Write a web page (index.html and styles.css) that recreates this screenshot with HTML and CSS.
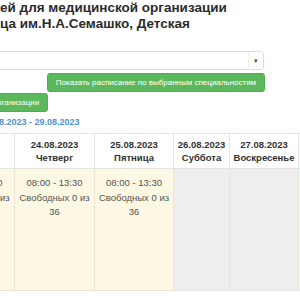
FILE: index.html
```html
<!DOCTYPE html>
<html lang="ru">
<head>
    <meta charset="UTF-8">
    <title>Расписание</title>
    <link rel="stylesheet" href="styles.css">
</head>
<body>
    <div class="page">
        <h3 class="title">ей для медицинской организации<br>ца им.Н.А.Семашко, Детская</h3>

        <div class="chooser">
            <div class="chooser-value"></div>
            <div class="chooser-arrow">▾</div>
        </div>

        <div class="actions">
            <a class="btn">Показать расписание по выбранным специальностям</a>
            <a class="btn btn-org">рганизации</a>
        </div>

        <div class="period">8.2023 - 29.08.2023</div>

        <table class="schedule">
            <thead>
                <tr>
                    <th class="w79">23.08.2023<br>Среда</th>
                    <th class="w79">24.08.2023<br>Четверг</th>
                    <th class="w78">25.08.2023<br>Пятница</th>
                    <th class="w55">26.08.2023<br>Суббота</th>
                    <th class="w68">27.08.2023<br>Воскресенье</th>
                    <th class="w79">28.08.2023<br>Понедельник</th>
                </tr>
            </thead>
            <tbody>
                <tr>
                    <td class="work">08:00 - 13:30<br>Свободных 0 из<br>36</td>
                    <td class="work">08:00 - 13:30<br>Свободных 0 из<br>36</td>
                    <td class="work">08:00 - 13:30<br>Свободных 0 из<br>36</td>
                    <td class="off"></td>
                    <td class="off"></td>
                    <td class="work">08:00 - 13:30<br>Свободных 0 из<br>36</td>
                </tr>
            </tbody>
        </table>
    </div>
</body>
</html>
```

FILE: styles.css
```css
body {
    margin: 0;
    width: 300px;
    height: 300px;
    overflow: hidden;
    background: #ffffff;
    font-family: "Liberation Sans", Arial, sans-serif;
    color: #333333;
}
.page {
    width: 265px;
}
.title {
    margin: 0;
    padding-top: 0;
    font-size: 13.5px;
    line-height: 16px;
    font-weight: bold;
    white-space: nowrap;
    color: #2b2b2b;
}
.chooser {
    display: flex;
    height: 17px;
    margin: 19px 1px 0 -20px;
    border: 1px solid #dddddd;
    border-radius: 3px;
    background: #ffffff;
}
.chooser-value {
    flex: 1;
}
.chooser-arrow {
    width: 14px;
    border-left: 1px solid #eeeeee;
    font-size: 7px;
    line-height: 17px;
    text-align: center;
    color: #444444;
}
.actions {
    display: flex;
    flex-direction: column;
    align-items: flex-end;
    margin-top: 3px;
}
.btn {
    display: flex;
    align-items: center;
    height: 17px;
    padding: 0 8px;
    border: 1px solid #4cae4c;
    border-radius: 3px;
    background: #5cb85c;
    color: #ffffff;
    font-size: 8px;
    white-space: nowrap;
}
.btn-org {
    align-self: flex-start;
    margin: 1px 0 0 -12px;
}
.period {
    margin: 5px 0 0 -1px;
    font-size: 9px;
    font-weight: bold;
    color: #4f93cc;
}
.schedule {
    margin: 6px 0 0 -66px;
    border-collapse: collapse;
    table-layout: fixed;
    width: 438px;
}
.w79 { width: 79px; }
.w78 { width: 78px; }
.w55 { width: 55px; }
.w68 { width: 68px; }
.schedule th {
    height: 34px;
    padding: 0;
    border: 1px solid #e4e4e4;
    background: #ffffff;
    font-size: 9.5px;
    line-height: 13px;
    font-weight: bold;
    color: #333333;
    text-align: center;
}
.schedule td {
    height: 114px;
    padding: 7px 0 0;
    vertical-align: top;
    border: 1px solid #eae6d6;
    font-size: 9.5px;
    line-height: 14.5px;
    text-align: center;
    color: #555555;
}
.schedule td.work {
    background: #fcf8e3;
}
.schedule td.off {
    background: #eeeeee;
    border-color: #e6e6e6;
}
```
